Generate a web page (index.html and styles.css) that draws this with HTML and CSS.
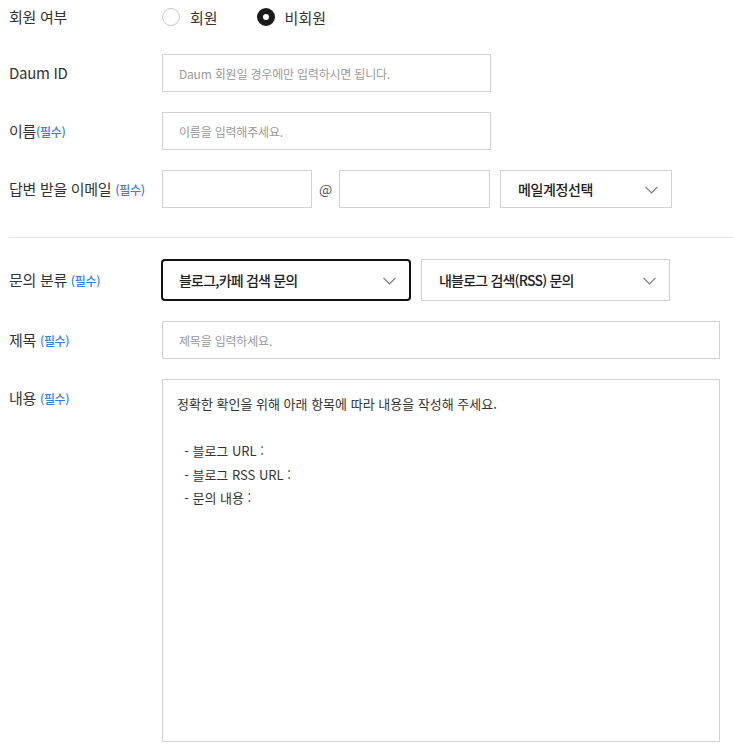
FILE: index.html
```html
<!DOCTYPE html>
<html lang="ko">
<head>
    <meta charset="UTF-8">
    <meta name="viewport" content="width=device-width, initial-scale=1.0">
    <title>문의하기</title>
    <link rel="stylesheet" href="styles.css">
</head>
<body>
    <form class="inquiry">
        <div class="row row-radio">
            <div class="label">회원 여부</div>
            <label class="radio"><input type="radio" name="member"><span class="dot"></span>회원</label>
            <label class="radio"><input type="radio" name="member" checked><span class="dot"></span>비회원</label>
        </div>
        <div class="row">
            <div class="label">Daum ID</div>
            <input class="text w-mid" type="text" placeholder="Daum 회원일 경우에만 입력하시면 됩니다.">
        </div>
        <div class="row">
            <div class="label">이름<span class="req">(필수)</span></div>
            <input class="text w-mid" type="text" placeholder="이름을 입력해주세요.">
        </div>
        <div class="row">
            <div class="label">답변 받을 이메일 <span class="req">(필수)</span></div>
            <input class="text w-mail" type="text">
            <span class="at">@</span>
            <input class="text w-domain" type="text">
            <div class="select w-mailsel">
                <select>
                    <option>메일계정선택</option>
                </select>
                <svg class="chev" width="13" height="8" viewBox="0 0 13 8"><path d="M0.5 0.8 L6.5 6.8 L12.5 0.8" fill="none" stroke="#777" stroke-width="1.2"/></svg>
            </div>
        </div>

        <hr class="divider">

        <div class="row">
            <div class="label">문의 분류 <span class="req">(필수)</span></div>
            <div class="select w-cat focused">
                <select>
                    <option>블로그,카페 검색 문의</option>
                </select>
                <svg class="chev" width="13" height="8" viewBox="0 0 13 8"><path d="M0.5 0.8 L6.5 6.8 L12.5 0.8" fill="none" stroke="#777" stroke-width="1.2"/></svg>
            </div>
            <div class="select w-sub">
                <select>
                    <option>내블로그 검색(RSS) 문의</option>
                </select>
                <svg class="chev" width="13" height="8" viewBox="0 0 13 8"><path d="M0.5 0.8 L6.5 6.8 L12.5 0.8" fill="none" stroke="#777" stroke-width="1.2"/></svg>
            </div>
        </div>
        <div class="row">
            <div class="label">제목 <span class="req">(필수)</span></div>
            <input class="text w-full" type="text" placeholder="제목을 입력하세요.">
        </div>
        <div class="row row-top">
            <div class="label">내용 <span class="req">(필수)</span></div>
            <textarea class="content">정확한 확인을 위해 아래 항목에 따라 내용을 작성해 주세요.

  - 블로그 URL :
  - 블로그 RSS URL :
  - 문의 내용 :</textarea>
        </div>
    </form>
</body>
</html>
```

FILE: styles.css
```css
body {
    margin: 0;
    font-family: "Noto Sans CJK KR", "Noto Sans", sans-serif;
    color: #333;
    background: #fff;
}
.inquiry {
    padding: 0 0 0 9px;
}
.row {
    display: flex;
    align-items: center;
    margin-bottom: 20px;
}
.row-radio {
    height: 34px;
}
.row-top {
    align-items: flex-start;
}
.label {
    width: 153px;
    flex-shrink: 0;
    font-size: 15px;
    line-height: 20px;
    color: #333;
    letter-spacing: -0.3px;
}
.row-top .label {
    padding-top: 9px;
}
.req {
    font-size: 12px;
    font-weight: 500;
    color: #2f7ef5;
    letter-spacing: -0.3px;
}

/* radio */
.radio {
    display: flex;
    align-items: center;
    font-size: 15px;
    color: #333;
    margin-right: 39px;
    cursor: pointer;
}
.radio input {
    display: none;
}
.radio .dot {
    width: 18px;
    height: 18px;
    box-sizing: border-box;
    border: 1px solid #c8c8c8;
    border-radius: 50%;
    margin-right: 10px;
    background: #fff;
}
.radio input:checked + .dot {
    border: 6px solid #1a1a1a;
}

/* text inputs */
.text {
    box-sizing: border-box;
    height: 38px;
    border: 1px solid #d2d2d2;
    padding: 0 16px;
    font-family: inherit;
    font-size: 12px;
    color: #333;
    outline: none;
    letter-spacing: -0.2px;
}
.text::placeholder {
    color: #9a9a9a;
}
.w-mid { width: 329px; }
.w-mail { width: 150px; }
.w-domain { width: 151px; }
.w-full { width: 558px; }
.at {
    width: 27px;
    text-align: center;
    font-size: 14px;
    color: #555;
}

/* selects */
.select {
    position: relative;
    box-sizing: border-box;
    height: 38px;
    border: 1px solid #d2d2d2;
    background: #fff;
}
.select select {
    appearance: none;
    -webkit-appearance: none;
    border: 0;
    background: transparent;
    width: 100%;
    height: 100%;
    padding: 0 40px 0 17px;
    font-family: inherit;
    font-size: 14px;
    font-weight: 500;
    color: #222;
    outline: none;
    letter-spacing: -0.4px;
}
.select .chev {
    position: absolute;
    right: 13px;
    top: 50%;
    margin-top: -3px;
    pointer-events: none;
}
.w-mailsel {
    width: 172px;
    margin-left: 10px;
}
.w-cat {
    width: 250px;
    height: 42px;
    margin-left: -1px;
}
.w-sub {
    width: 249px;
    height: 42px;
    margin-left: 10px;
}
.w-cat select,
.w-sub select {
    letter-spacing: -0.8px;
}
.focused {
    border: 2px solid #111;
    border-radius: 4px;
}
.focused select {
    padding-left: 16px;
}

.divider {
    border: 0;
    border-top: 1px solid #e6e6e6;
    margin: 29px 0 21px 0;
}

.content {
    box-sizing: border-box;
    width: 558px;
    height: 363px;
    border: 1px solid #d2d2d2;
    padding: 12px 14px;
    font-family: inherit;
    font-size: 13px;
    line-height: 23.5px;
    color: #333;
    resize: none;
    outline: none;
    letter-spacing: 0;
}
```
